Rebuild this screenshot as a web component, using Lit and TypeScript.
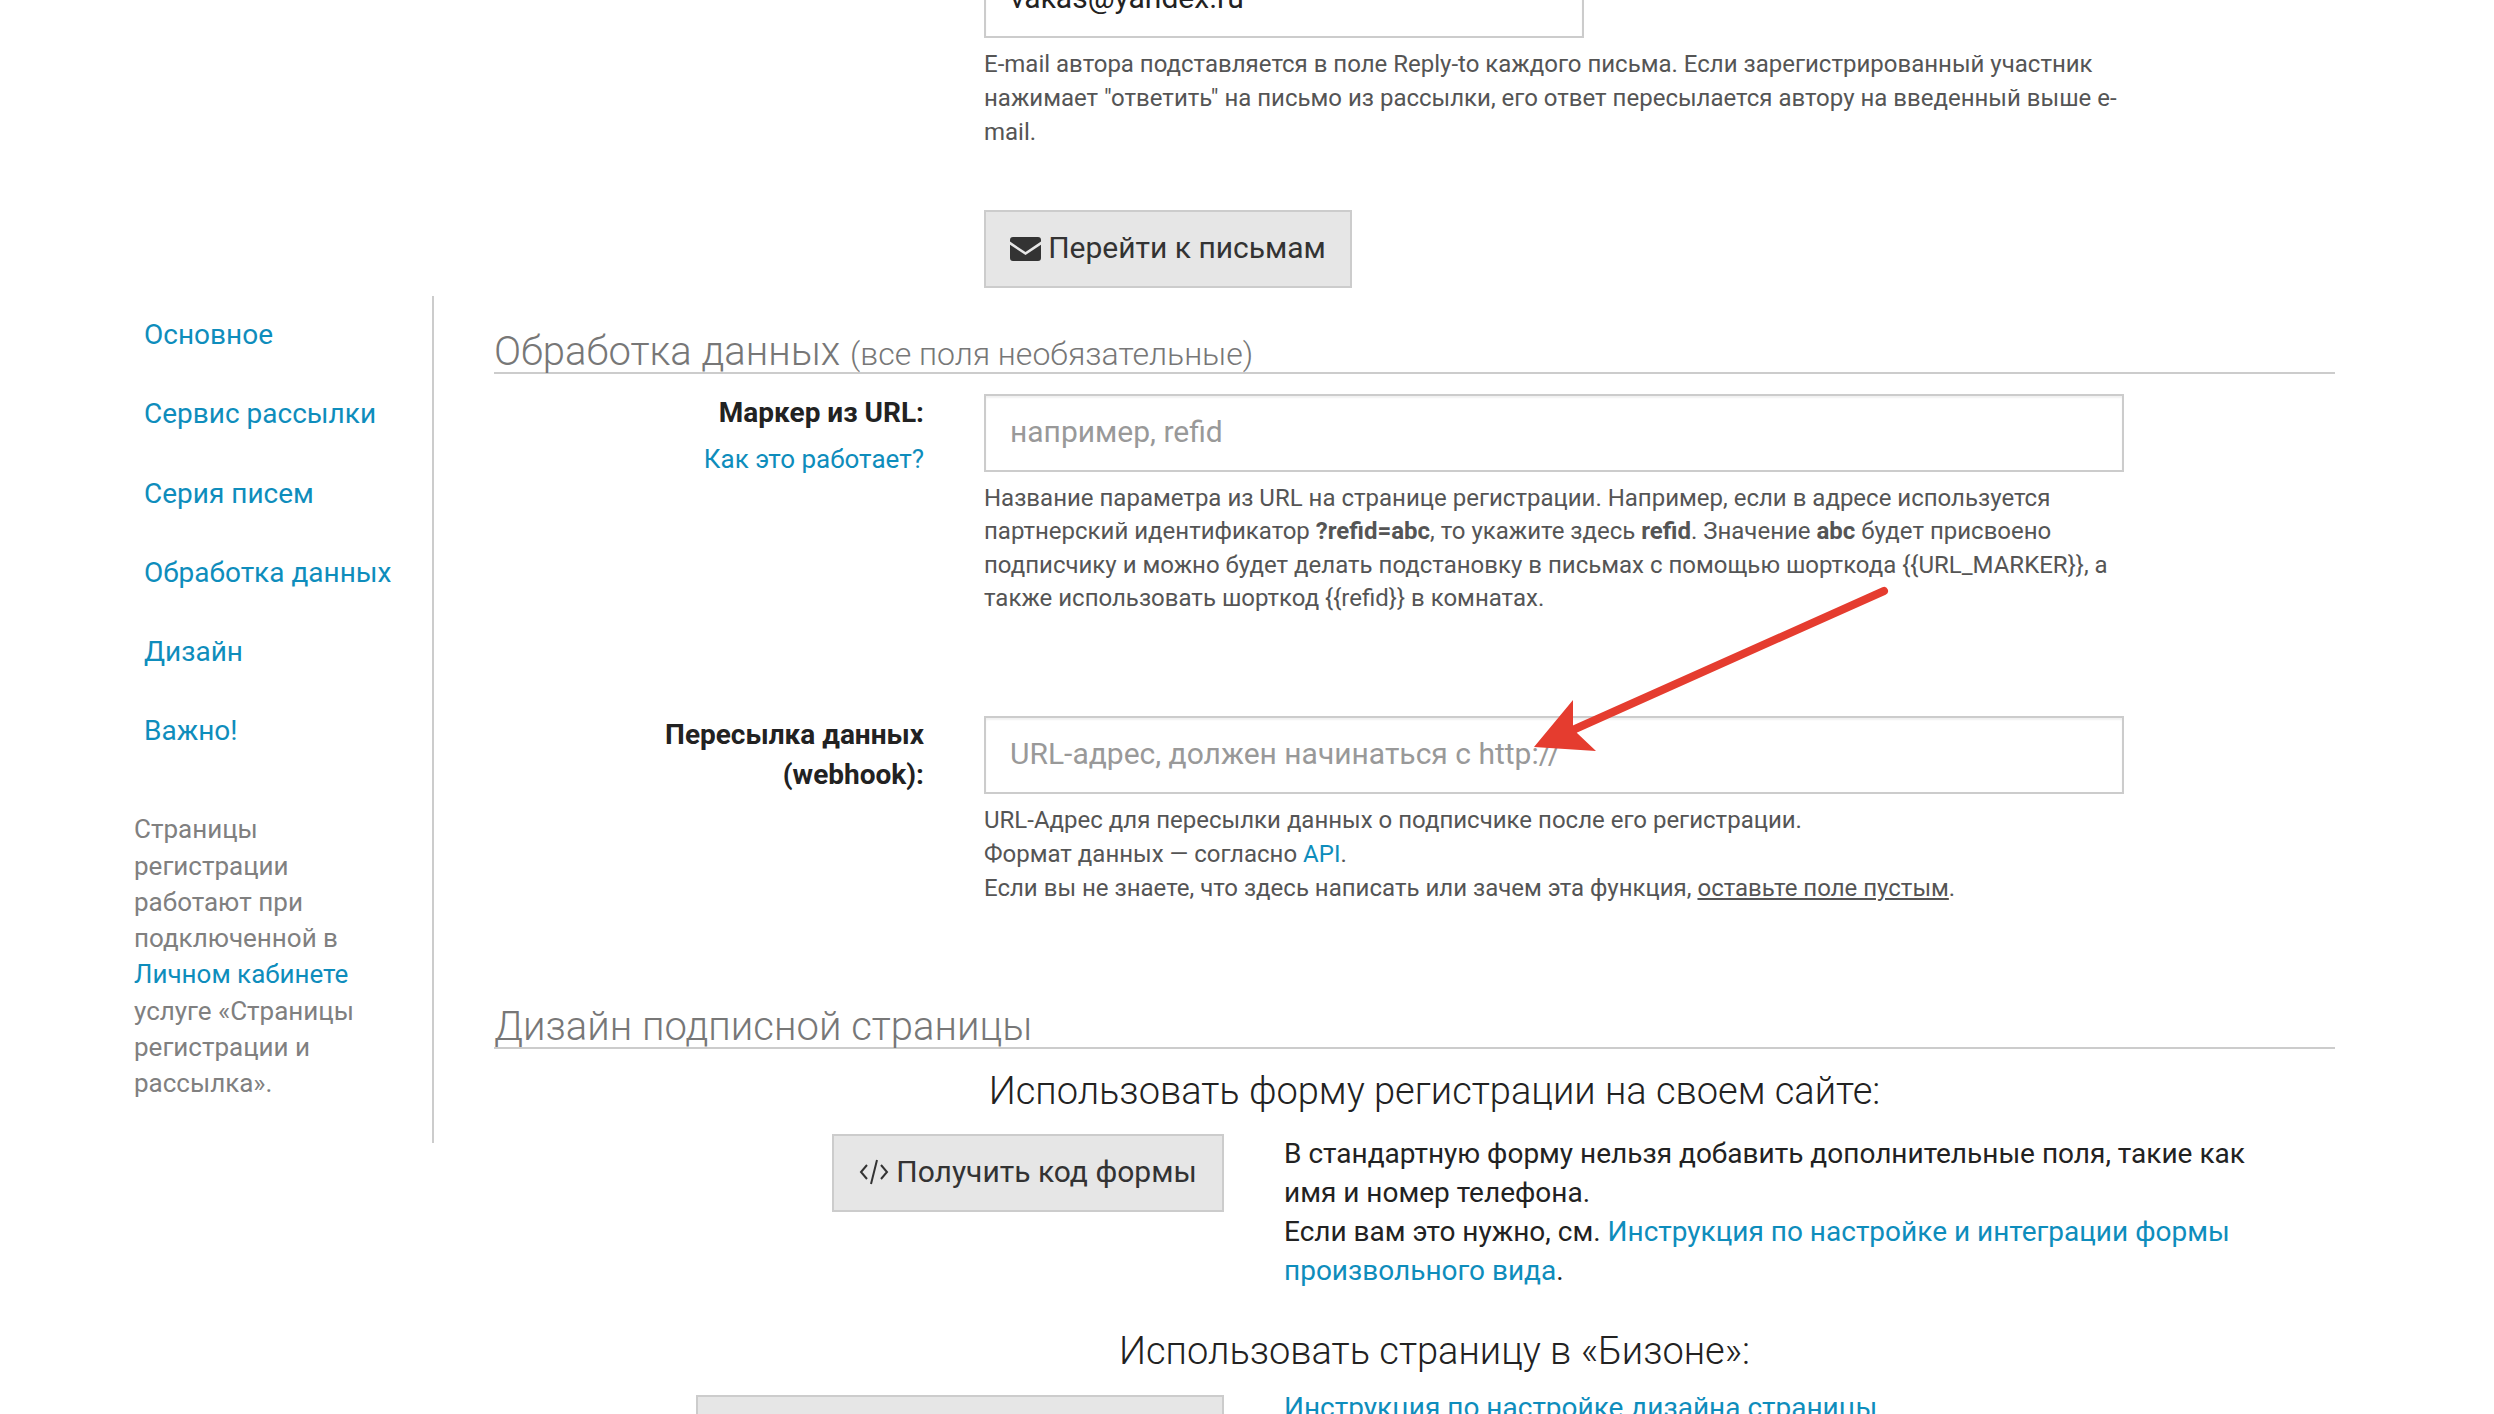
import { LitElement, html, css } from "lit";
import { customElement } from "lit/decorators.js";

@customElement("app-root")
export class AppRoot extends LitElement {
  static styles = css`
    :host { display: block; height: 1414px; overflow: hidden; position: relative; background: #fff;
      font-family: Roboto, "Liberation Sans", sans-serif; color: #222; }
    a { color: #0e8dbc; text-decoration: none; }
    .page { margin-top: -40px; }
    .top { margin-left: 984px; width: 1140px; }
    input { display: block; box-sizing: border-box; height: 78px; border: 2px solid #ccc; padding: 0 24px 3px;
      font: 400 30px Roboto, sans-serif; color: #222; background: #fff; outline: none; width: 100%; border-radius: 0;
      box-shadow: inset 0 2px 2px rgba(0,0,0,.06); }
    input::placeholder { color: #999; opacity: 1; }
    .email { width: 600px; }
    .help { font-size: 24px; line-height: 34px; color: #555; margin-top: 8.5px; }
    .help b { font-weight: 700; }
    .help u { color: #555; }
    .btn { display: inline-flex; align-items: center; justify-content: center; gap: 6px; box-sizing: border-box; height: 78px;
      background: #e6e6e6; border: 2px solid #ccc; font-size: 30px; color: #333; white-space: nowrap; padding-bottom: 3px; }
    .btn svg { position: relative; top: 1px; }
    .top .btn { width: 368px; margin-top: 61.5px; gap: 7px; }
    .row { display: flex; margin-top: 7.5px; }
    aside { box-sizing: border-box; width: 300px; margin-left: 134px; border-right: 2px solid #ccc; height: 847.5px; flex: none; }
    nav { display: flex; flex-direction: column; gap: 46.3px; padding: 22.5px 0 0 10px; }
    nav a { font-size: 28px; line-height: 33px; }
    .note { font-size: 26px; line-height: 36.2px; color: #808080; width: 240px; margin-top: 64px; }
    .note a { color: #0e8dbc; }
    main { margin-left: 60px; width: 1841px; flex: none; }
    h2 { margin: 0; font-weight: 300; font-size: 40px; line-height: 48px; color: #777; border-bottom: 2px solid #ccc; height: 78px;
      box-sizing: border-box; padding-top: 32px; }
    h2 small { font-size: 32px; font-weight: 300; }
    .field { display: grid; grid-template-columns: 430px 1140px; column-gap: 60px; }
    .f1 { margin-top: 20.5px; }
    .f2 { margin-top: 100px; }
    .lab { text-align: right; font-weight: 700; font-size: 28px; line-height: 40px; color: #222; }
    .f1 .lab { margin-top: -1px; }
    .f2 .lab { margin-top: -1px; }
    .lab a { display: block; font-weight: 400; font-size: 26px; line-height: 36px; margin-top: 8px; }
    .help.h2 { margin-top: 10px; line-height: 33.4px; }
    .f2 .help.h2 { line-height: 34px; margin-top: 9.5px; }
    .sec2 { margin-top: 65.5px; }
    h3 { margin: 0; font-weight: 300; font-size: 38px; line-height: 46px; text-align: center; color: #222; padding-left: 40px; }
    .use { display: grid; grid-template-columns: 730px 1fr; column-gap: 60px; }
    .use .left { display: flex; justify-content: flex-end; }
    .use1 { margin-top: 20px; }
    .use2 { margin-top: 21px; }
    .use2 p { margin-top: -7px !important; }
    .use p { margin: 0; font-size: 28px; line-height: 39px; color: #222; width: 1000px; }
    h3.a { margin-top: 19px; }
    h3.b { margin-top: 38px; }
    .big { width: 528px; }
    .code { width: 392px; gap: 7px; }
    .arrow { position: absolute; left: 0; top: 0; pointer-events: none; }
  `;

  render() {
    return html`
      <div class="page">
        <div class="top">
          <input class="email" .value=${"vakas@yandex.ru"} />
          <div class="help">E-mail автора подставляется в поле Reply-to каждого письма. Если зарегистрированный участник нажимает "ответить" на письмо из рассылки, его ответ пересылается автору на введенный выше e-mail.</div>
          <div class="btn">
            <svg width="31" height="24" viewBox="0 0 31 24"><path fill="#333" d="M3 0h25a3 3 0 0 1 3 3v1.600L15.500 15 0 4.600V3a3 3 0 0 1 3-3zM0 7.700l15.500 10.300L31 7.700V21a3 3 0 0 1-3 3H3a3 3 0 0 1-3-3z"/></svg>
            Перейти к письмам
          </div>
        </div>
        <div class="row">
          <aside>
            <nav>
              <a href="#">Основное</a>
              <a href="#">Сервис рассылки</a>
              <a href="#">Серия писем</a>
              <a href="#">Обработка данных</a>
              <a href="#">Дизайн</a>
              <a href="#">Важно!</a>
            </nav>
            <div class="note">Страницы регистрации работают при подключенной в <a href="#">Личном кабинете</a> услуге «Страницы регистрации и рассылка».</div>
          </aside>
          <main>
            <h2>Обработка данных <small>(все поля необязательные)</small></h2>
            <div class="field f1">
              <div class="lab">Маркер из URL:<a href="#">Как это работает?</a></div>
              <div>
                <input placeholder="например, refid" />
                <div class="help h2">Название параметра из URL на странице регистрации. Например, если в адресе используется партнерский идентификатор <b>?refid=abc</b>, то укажите здесь <b>refid</b>. Значение <b>abc</b> будет присвоено подписчику и можно будет делать подстановку в письмах с помощью шорткода {{URL_MARKER}}, а также использовать шорткод {{refid}} в комнатах.</div>
              </div>
            </div>
            <div class="field f2">
              <div class="lab">Пересылка данных<br />(webhook):</div>
              <div>
                <input placeholder="URL-адрес, должен начинаться с http://" />
                <div class="help h2">URL-Адрес для пересылки данных о подписчике после его регистрации.<br />Формат данных — согласно <a href="#">API</a>.<br />Если вы не знаете, что здесь написать или зачем эта функция, <u>оставьте поле пустым</u>.</div>
              </div>
            </div>
            <h2 class="sec2">Дизайн подписной страницы</h2>
            <h3 class="a">Использовать форму регистрации на своем сайте:</h3>
            <div class="use use1">
              <div class="left">
                <div class="btn code">
                  <svg width="30" height="26" viewBox="0 0 30 26" fill="none" stroke="#333" stroke-width="2"><path d="M8 6l-6 7 6 7M22 6l6 7-6 7M18 1l-6 24"/></svg>
                  Получить код формы
                </div>
              </div>
              <p>В стандартную форму нельзя добавить дополнительные поля, такие как имя и номер телефона.<br />Если вам это нужно, см. <a href="#">Инструкция по настройке и интеграции формы произвольного вида</a>.</p>
            </div>
            <h3 class="b">Использовать страницу в «Бизоне»:</h3>
            <div class="use use2">
              <div class="left"><div class="btn big"></div></div>
              <p><a href="#">Инструкция по настройке дизайна страницы</a></p>
            </div>
          </main>
        </div>
      </div>
      <svg class="arrow" width="2494" height="1414" viewBox="0 0 2494 1414">
        <path d="M1884 591L1575 729" stroke="#e53c2f" stroke-width="8" stroke-linecap="round" fill="none"/>
        <path d="M1534 747L1573 700L1573 726L1577 733L1596 751Z" fill="#e53c2f"/>
      </svg>
    `;
  }
}
